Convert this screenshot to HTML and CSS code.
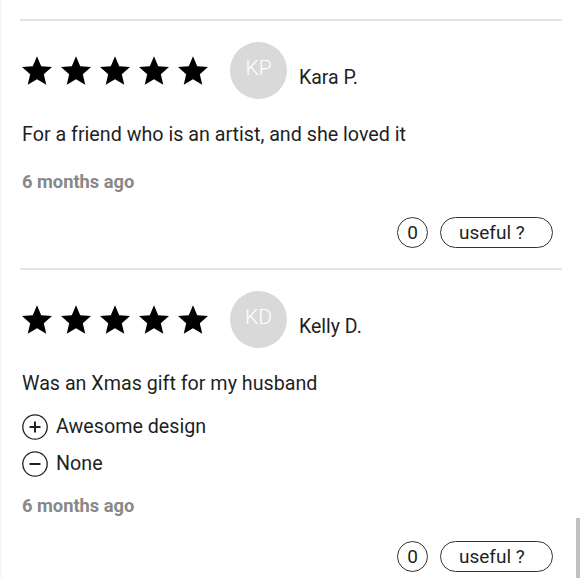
FILE: index.html
```html
<!DOCTYPE html>
<html lang="en">
  <head>
    <meta charset="UTF-8" />
    <meta name="viewport" content="width=device-width, initial-scale=1.0" />
    <title>Reviews</title>
    <link rel="stylesheet" href="styles.css">
  </head>
  <body>
    <div class="reviews">
      <div class="review">
        <div class="review-head">
          <div class="stars">
            <svg viewBox="2 2 20 19"><path d="M12 17.27L18.18 21l-1.64-7.03L22 9.24l-7.19-.61L12 2 9.19 8.63 2 9.24l5.46 4.73L5.82 21z"/></svg>
            <svg viewBox="2 2 20 19"><path d="M12 17.27L18.18 21l-1.64-7.03L22 9.24l-7.19-.61L12 2 9.19 8.63 2 9.24l5.46 4.73L5.82 21z"/></svg>
            <svg viewBox="2 2 20 19"><path d="M12 17.27L18.18 21l-1.64-7.03L22 9.24l-7.19-.61L12 2 9.19 8.63 2 9.24l5.46 4.73L5.82 21z"/></svg>
            <svg viewBox="2 2 20 19"><path d="M12 17.27L18.18 21l-1.64-7.03L22 9.24l-7.19-.61L12 2 9.19 8.63 2 9.24l5.46 4.73L5.82 21z"/></svg>
            <svg viewBox="2 2 20 19"><path d="M12 17.27L18.18 21l-1.64-7.03L22 9.24l-7.19-.61L12 2 9.19 8.63 2 9.24l5.46 4.73L5.82 21z"/></svg>
          </div>
          <div class="avatar">KP</div>
          <div class="author">Kara P.</div>
        </div>
        <p class="text">For a friend who is an artist, and she loved it</p>
        <div class="date">6 months ago</div>
        <div class="votes">
          <span class="count">0</span>
          <button class="useful">useful ?</button>
        </div>
      </div>

      <div class="review">
        <div class="review-head">
          <div class="stars">
            <svg viewBox="2 2 20 19"><path d="M12 17.27L18.18 21l-1.64-7.03L22 9.24l-7.19-.61L12 2 9.19 8.63 2 9.24l5.46 4.73L5.82 21z"/></svg>
            <svg viewBox="2 2 20 19"><path d="M12 17.27L18.18 21l-1.64-7.03L22 9.24l-7.19-.61L12 2 9.19 8.63 2 9.24l5.46 4.73L5.82 21z"/></svg>
            <svg viewBox="2 2 20 19"><path d="M12 17.27L18.18 21l-1.64-7.03L22 9.24l-7.19-.61L12 2 9.19 8.63 2 9.24l5.46 4.73L5.82 21z"/></svg>
            <svg viewBox="2 2 20 19"><path d="M12 17.27L18.18 21l-1.64-7.03L22 9.24l-7.19-.61L12 2 9.19 8.63 2 9.24l5.46 4.73L5.82 21z"/></svg>
            <svg viewBox="2 2 20 19"><path d="M12 17.27L18.18 21l-1.64-7.03L22 9.24l-7.19-.61L12 2 9.19 8.63 2 9.24l5.46 4.73L5.82 21z"/></svg>
          </div>
          <div class="avatar">KD</div>
          <div class="author">Kelly D.</div>
        </div>
        <p class="text">Was an Xmas gift for my husband</p>
        <ul class="pros">
          <li>
            <svg class="sign" viewBox="0 0 26 26"><circle cx="13" cy="13" r="12.2"/><path d="M7.5 13h11M13 7.5v11"/></svg>
            Awesome design
          </li>
          <li>
            <svg class="sign" viewBox="0 0 26 26"><circle cx="13" cy="13" r="12.2"/><path d="M7.5 13h11"/></svg>
            None
          </li>
        </ul>
        <div class="date">6 months ago</div>
        <div class="votes">
          <span class="count">0</span>
          <button class="useful">useful ?</button>
        </div>
      </div>
    </div>

    <div class="scroll-thumb"></div>
  </body>
</html>
```

FILE: styles.css
```css
html,
body {
  margin: 0;
  padding: 0;
  background: #fff;
  font-family: Roboto, "Noto Sans", sans-serif;
  color: #1f1f1f;
}

body {
  border-left: 2px solid #f7f7f7;
  min-height: 578px;
  box-sizing: border-box;
}

.reviews {
  padding: 0 18px 0 18px;
}

.review {
  border-top: 2px solid #e4e4e4;
  margin-top: 19px;
  padding: 21px 0 0 2px;
}

.review + .review {
  margin-top: 20px;
}

.review-head {
  display: flex;
  align-items: center;
}

.stars {
  display: flex;
  gap: 9px;
}

.stars svg {
  width: 30px;
  height: 29px;
  fill: #000;
}

.avatar {
  width: 57px;
  height: 57px;
  border-radius: 50%;
  background: #d9d9d9;
  color: #fff;
  font-size: 21px;
  font-weight: 300;
  display: flex;
  align-items: center;
  justify-content: center;
  padding-bottom: 5px;
  box-sizing: border-box;
  margin-left: 22px;
}

.author {
  font-size: 19.5px;
  margin-left: 12px;
  padding-top: 14px;
}

.text {
  margin: 24px 0 0;
  font-size: 19.7px;
  line-height: 24px;
}

.pros {
  list-style: none;
  margin: 18px 0 0;
  padding: 0;
  display: flex;
  flex-direction: column;
  gap: 11px;
}

.pros li {
  display: flex;
  align-items: center;
  gap: 8px;
  font-size: 19.7px;
  line-height: 26px;
}

.sign {
  width: 26px;
  height: 26px;
  fill: none;
  stroke: #222;
  stroke-width: 1.3;
}

.sign path {
  stroke-width: 2;
}

.date {
  margin-top: 24px;
  font-size: 18.3px;
  line-height: 22px;
  font-weight: 700;
  color: #888;
}

.pros + .date {
  margin-top: 18px;
}

.votes {
  display: flex;
  justify-content: flex-end;
  gap: 12px;
  margin-top: 24px;
  margin-right: 9px;
}

.count,
.useful {
  height: 31px;
  box-sizing: border-box;
  border: 1px solid #333;
  background: #fff;
  font-family: inherit;
  font-size: 19px;
  color: #1f1f1f;
  display: flex;
  align-items: center;
}

.count {
  width: 31px;
  border-radius: 50%;
  justify-content: center;
}

.useful {
  width: 113px;
  border-radius: 16px;
  padding: 0 0 0 18px;
}

.scroll-thumb {
  position: fixed;
  right: 0;
  bottom: 0;
  width: 4px;
  height: 60px;
  background: #c1c1c1;
}
```
